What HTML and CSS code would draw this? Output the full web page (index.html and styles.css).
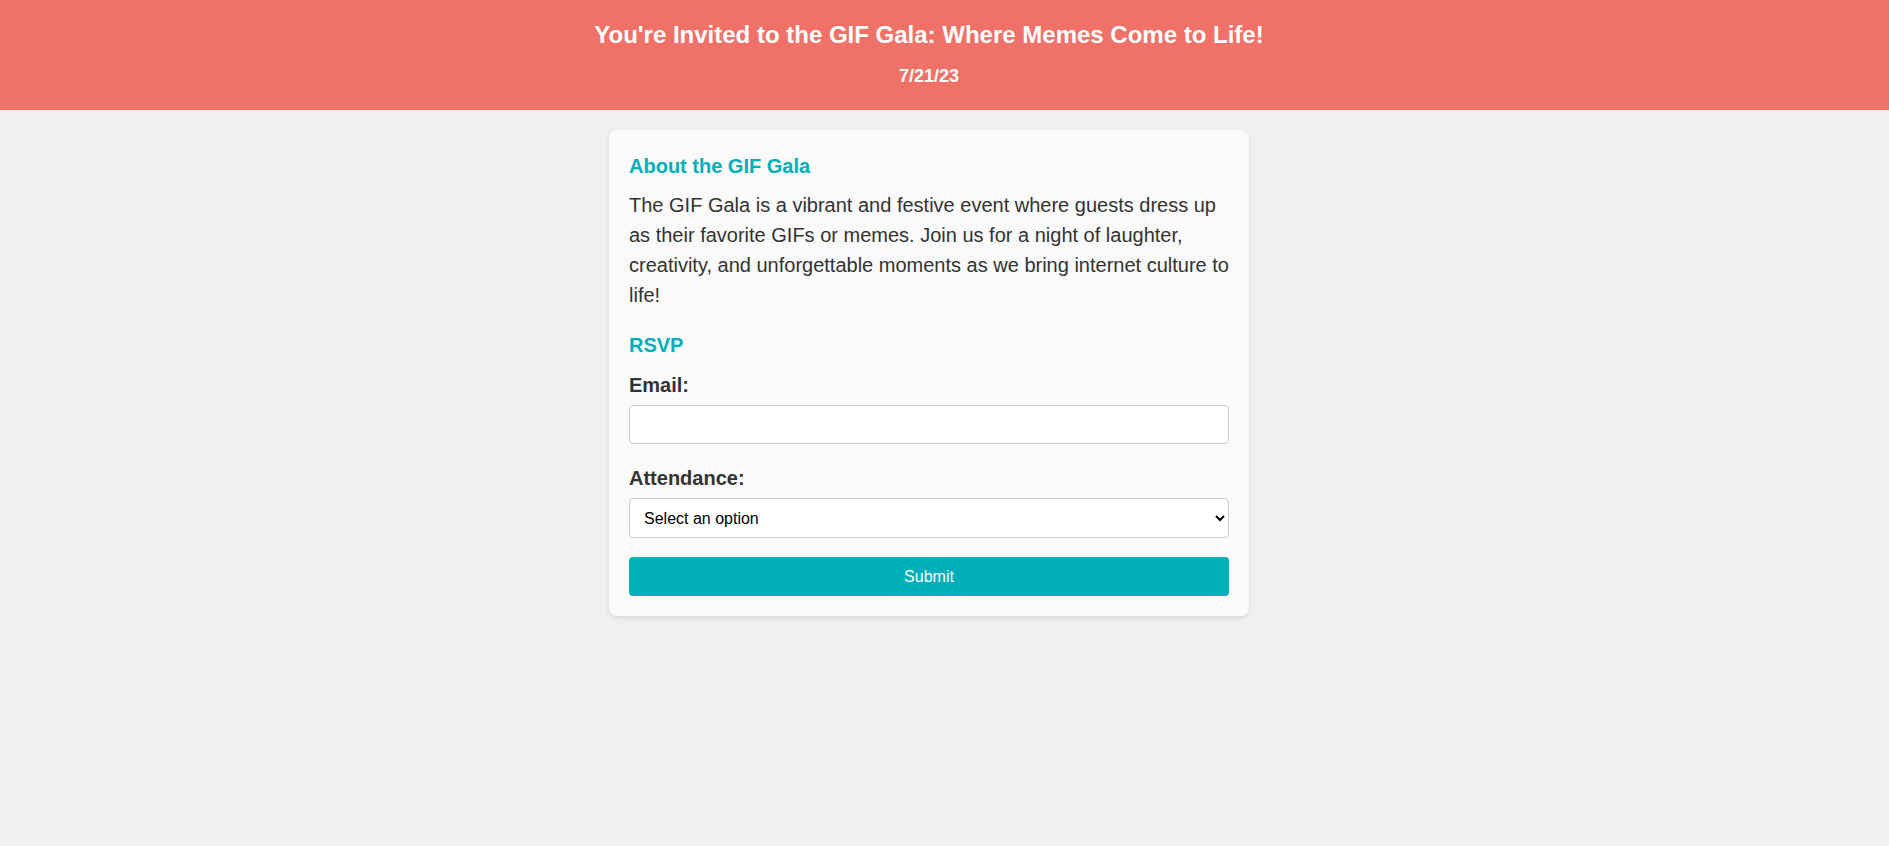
FILE: index.html
```html
<!DOCTYPE html>
<html lang="en">
<head>
<meta charset="utf-8">
<title>GIF Gala</title>
<link rel="stylesheet" href="styles.css">
</head>
<body>
<header class="hero">
  <h1 class="hero-title">You're Invited to the GIF Gala: Where Memes Come to Life!</h1>
  <p class="hero-date">7/21/23</p>
</header>
<div class="page">
  <main class="card">
    <h2 class="section-title">About the GIF Gala</h2>
    <p class="about">The GIF Gala is a vibrant and festive event where guests dress up as their favorite GIFs or memes. Join us for a night of laughter, creativity, and unforgettable moments as we bring internet culture to life!</p>
    <h2 class="section-title rsvp-title">RSVP</h2>
    <form class="rsvp-form">
      <label class="field-label" for="email">Email:</label>
      <input class="field-input" type="email" id="email">
      <label class="field-label" for="attendance">Attendance:</label>
      <select class="field-select" id="attendance">
        <option>Select an option</option>
        <option>Yes, I'll be there</option>
        <option>No, I can't make it</option>
      </select>
      <button class="submit-btn" type="button">Submit</button>
    </form>
  </main>
</div>
</body>
</html>
```

FILE: styles.css
```css
* { box-sizing: border-box; }
body {
  margin: 0;
  background: #f0f0f0;
  font-family: "Liberation Sans", Arial, sans-serif;
  color: #333;
  line-height: 1.6;
}
.hero {
  background: #f07167;
  color: #fff;
  text-align: center;
  padding: 18px 51px 20px 20px;
}
.hero-title {
  margin: 0;
  font-size: 24px;
  line-height: 1.4;
}
.hero-date {
  margin: 10px 0 0;
  font-size: 18px;
  font-weight: bold;
}
.page {
  padding: 20px 31px 20px 0;
}
.card {
  width: 640px;
  margin: 0 auto;
  background: #fafafa;
  border-radius: 8px;
  box-shadow: 0 2px 5px rgba(0,0,0,0.1);
  padding: 20px;
}
.section-title {
  color: #00afb9;
  font-size: 20px;
  line-height: 32px;
  margin: 0 0 8px;
}
.about {
  margin: 0;
  font-size: 20px;
  line-height: 30px;
}
.rsvp-title {
  margin-top: 19px;
}
.rsvp-form {
  display: flex;
  flex-direction: column;
}
.field-label {
  font-weight: bold;
  font-size: 20px;
  line-height: 32px;
  margin-bottom: 4px;
}
.field-input, .field-select {
  font-family: "Liberation Sans", Arial, sans-serif;
  font-size: 16px;
  padding: 10px;
  border: 1px solid #ccc;
  border-radius: 4px;
  background: #fff;
  color: #000;
}
.field-input { height: 39px; margin-bottom: 18px; }
.field-select { height: 40px; margin-bottom: 19px; }
.submit-btn {
  font-family: "Liberation Sans", Arial, sans-serif;
  font-size: 16px;
  color: #fff;
  background: #00afb9;
  border: none;
  border-radius: 4px;
  height: 39px;
  cursor: pointer;
}
```
